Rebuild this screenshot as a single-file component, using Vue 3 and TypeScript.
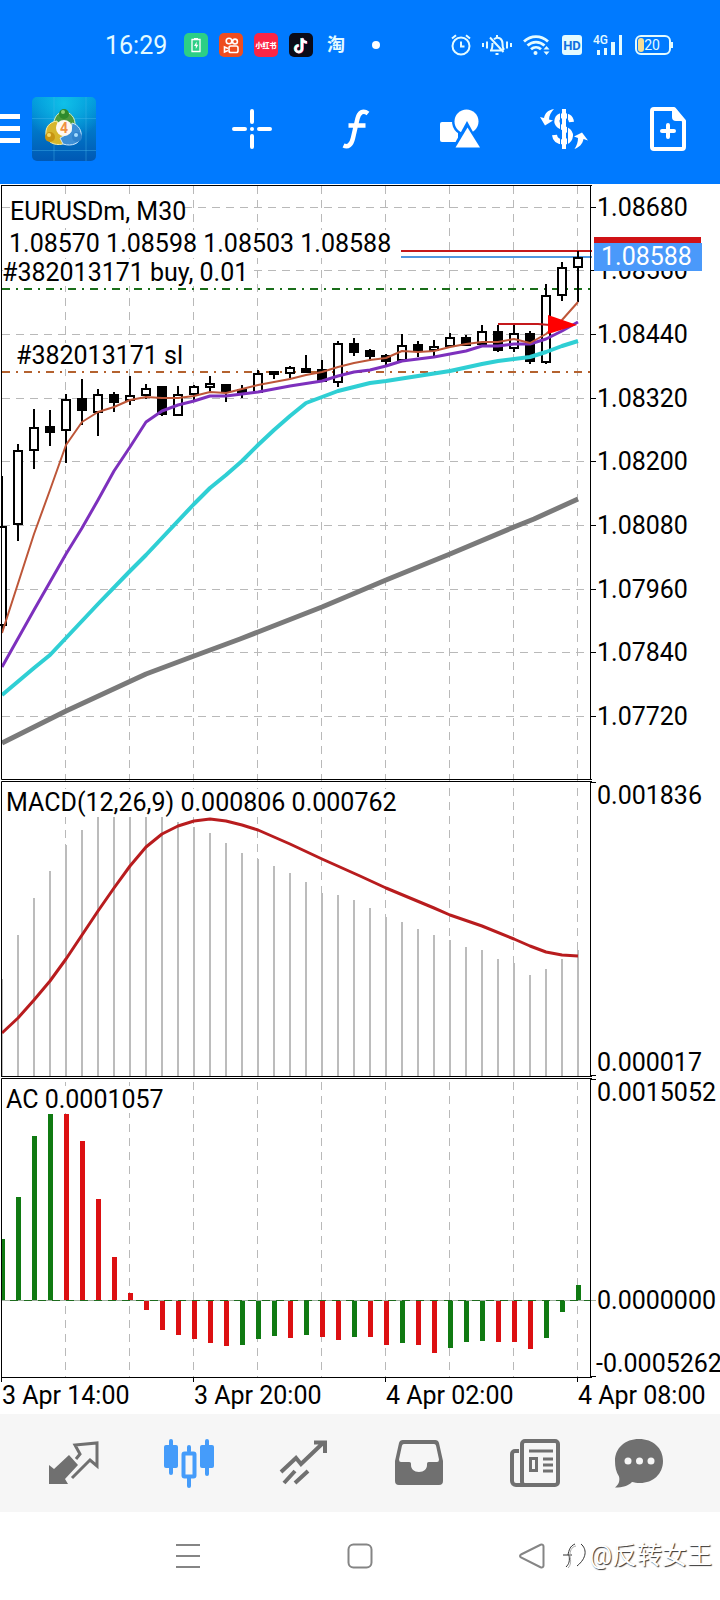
<script setup lang="ts">
interface Candle {
  x: number
  high: number
  top: number
  bottom: number
  low: number
  filled: boolean
}

interface Label {
  text: string
  x: number
  y: number
}

const STEP = 16
const FIRST = 2
const ZERO = 1300

const gridX = Array.from({ length: 9 }, (_, i) => 65.5 + i * 64)

const prices: Label[] = [
  ['1.08680', 207.5],
  ['1.08560', 270.5],
  ['1.08440', 334.5],
  ['1.08320', 398.5],
  ['1.08200', 461.5],
  ['1.08080', 525.5],
  ['1.07960', 589.5],
  ['1.07840', 652.5],
  ['1.07720', 716.5],
].map(([text, y]) => ({ text: String(text), x: 597, y: Number(y) }))

const scaleLabels: Label[] = [
  { text: '0.001836', x: 597, y: 804 },
  { text: '0.000017', x: 597, y: 1071 },
  { text: '0.0015052', x: 597, y: 1101 },
  { text: '0.0000000', x: 597, y: 1309 },
  { text: '-0.0005262', x: 596, y: 1372 },
]

const times: Label[] = [
  { text: '3 Apr 14:00', x: 2, y: 1404 },
  { text: '3 Apr 20:00', x: 194, y: 1404 },
  { text: '4 Apr 02:00', x: 386, y: 1404 },
  { text: '4 Apr 08:00', x: 578, y: 1404 },
]

// high, body top, body bottom, low, bearish
const rawCandles: [number, number, number, number, number][] = [
  [476, 526, 626, 633, 0],
  [444, 450, 525, 541, 0],
  [409, 427, 451, 469, 0],
  [410, 426, 433, 446, 1],
  [394, 399, 431, 463, 0],
  [379, 398, 411, 425, 1],
  [389, 394, 413, 436, 0],
  [392, 394, 403, 412, 1],
  [376, 395, 401, 405, 0],
  [384, 388, 396, 399, 0],
  [386, 386, 415, 416, 1],
  [386, 394, 416, 416, 0],
  [385, 386, 395, 401, 0],
  [376, 383, 388, 392, 0],
  [384, 384, 392, 402, 1],
  [385, 389, 394, 398, 1],
  [370, 373, 393, 393, 0],
  [371, 371, 375, 379, 1],
  [366, 367, 374, 378, 0],
  [355, 368, 373, 373, 1],
  [360, 369, 382, 382, 1],
  [341, 343, 383, 387, 0],
  [338, 343, 353, 356, 1],
  [349, 350, 357, 361, 1],
  [354, 355, 362, 367, 1],
  [334, 345, 361, 361, 0],
  [341, 344, 352, 357, 1],
  [340, 346, 351, 358, 0],
  [333, 337, 347, 347, 0],
  [335, 337, 346, 346, 1],
  [325, 331, 345, 345, 0],
  [325, 331, 351, 352, 1],
  [325, 333, 349, 352, 0],
  [331, 333, 362, 364, 1],
  [284, 295, 363, 364, 0],
  [262, 267, 296, 301, 0],
  [251, 257, 268, 302, 0],
]

const candles: Candle[] = rawCandles.map(([high, top, bottom, low, f], i) => ({
  x: FIRST + i * STEP,
  high,
  top,
  bottom,
  low,
  filled: f === 1,
}))

const fastMa =
  '2,633 34,534 50,490 66,445 82,422 98,412 114,407 130,400 146,397 162,398 178,398 194,396 210,392 226,393 242,389 258,385 274,382 290,379 306,375 322,372 338,367 354,363 370,360 386,358 402,351 418,352 434,351 450,347 466,344 482,342 498,342 514,339 530,343 546,334 562,320 578,302'
const midMa =
  '2,667 34,610 66,554 82,528 98,500 114,471 130,447 146,422 162,411 178,405 194,401 210,396 226,396 242,394 258,392 290,386 322,381 338,376 354,372 370,370 386,366 402,361 434,357 466,351 482,346 498,346 514,344 530,344 546,339 562,331 578,322'
const slowMa =
  '2,695 34,668 50,655 66,638 98,604 130,571 146,555 194,504 210,488 226,475 242,461 258,445 274,430 290,416 306,403 322,397 338,391 370,383 386,381 418,376 450,371 482,364 498,361 530,357 546,352 562,346 578,341'
const longMa =
  '2,743 66,711 146,674 194,656 240,639 258,632 322,607 360,591 386,580 450,554 514,527 534,519 578,499'
const signal =
  '2,1033 18,1018 34,1000 50,981 66,959 82,935 98,911 114,888 130,866 146,847 162,834 178,826 194,821 210,819 226,821 242,825 258,830 290,844 322,859 360,876 386,888 434,908 450,915 482,926 514,939 530,946 546,952 562,955 578,956'

const macd = [
  979, 935, 898, 871, 845, 830, 816, 816, 816, 816, 816, 822, 827, 833, 843, 853, 859, 866, 873,
  882, 893, 895, 900, 908, 917, 922, 929, 935, 940, 947, 950, 959, 963, 975, 969, 959, 950,
]

const acValues = [
  1239, 1197, 1136, 1114, 1114, 1141, 1199, 1257, 1293, 1310, 1330, 1335, 1339, 1343, 1346, 1345,
  1339, 1336, 1338, 1335, 1337, 1340, 1337, 1337, 1345, 1343, 1345, 1353, 1348, 1342, 1341, 1342,
  1342, 1349, 1338, 1312, 1285,
]
const acColors = 'GGGGRRRRRRRRRRRGGGRGRRGRRGRRGGGRRRGGG'
const acBars = acValues.map((v, i) => ({
  x: i * STEP + (i === 0 ? 2 : 0),
  width: i === 0 ? 3 : 5,
  y: v < ZERO ? v : ZERO + 1,
  height: v < ZERO ? ZERO - v : v - ZERO - 1,
  rising: acColors[i] === 'G',
}))
</script>

<template>
  <div class="screen">
    <header class="top">
      <div class="status">
        <span class="clock">16:29</span>
        <div class="apps">
          <svg class="app" viewBox="0 0 24 24" aria-hidden="true">
            <rect width="24" height="24" rx="5" fill="#2ccf86" />
            <path d="M8 6.500h8v12H8z" fill="none" stroke="#fff" stroke-width="1.300" />
            <path d="M10 5h4v1.500h-4zM12.800 8.500 10 13h1.800v3L14.300 11.800h-1.800z" fill="#fff" />
          </svg>
          <svg class="app" viewBox="0 0 24 24" aria-hidden="true">
            <rect width="24" height="24" rx="5" fill="#ee4d1f" />
            <g fill="none" stroke="#fff" stroke-width="1.600">
              <circle cx="10" cy="8" r="2.800" />
              <circle cx="16" cy="8.500" r="2.400" />
              <rect x="10" y="13" width="9" height="6.500" rx="1.800" />
              <path d="M9 15.500 5.500 14v5L9 17.500" />
            </g>
          </svg>
          <svg class="app" viewBox="0 0 24 24" aria-hidden="true">
            <rect width="24" height="24" rx="5" fill="#fb2545" />
            <text x="12" y="15" class="app-word">小红书</text>
          </svg>
          <svg class="app" viewBox="0 0 24 24" aria-hidden="true">
            <rect width="24" height="24" rx="5" fill="#0b0b18" />
            <g fill="none" stroke-width="2.600">
              <path d="M12.500 5v10.500a3.300 3.300 0 1 1-3.300-3.300M12.500 5c.4 2.600 2 4 4.800 4.200" stroke="#27e5e0" />
              <path d="M13.700 5.500V16a3.300 3.300 0 1 1-3.300-3.300M13.700 5.500c.4 2.600 2 4 4.800 4.200" stroke="#fb2a52" />
              <path d="M13.100 5.200v10.600a3.300 3.300 0 1 1-3.300-3.300M13.100 5.200c.4 2.600 2 4 4.800 4.200" stroke="#fff" />
            </g>
          </svg>
        </div>
        <span class="tao">淘</span>
        <span class="dot"></span>
        <div class="signals">
          <svg width="20" height="22" viewBox="0 0 20 22" aria-hidden="true">
            <g fill="none" stroke="#e4fbff" stroke-width="2">
              <circle cx="10" cy="12" r="8.500" />
              <path d="M10 7.500V12.500h3.500M1 4.500 5 1.200M19 4.500 15 1.200" />
            </g>
          </svg>
          <svg width="30" height="22" viewBox="0 0 30 22" aria-hidden="true">
            <g fill="none" stroke="#e4fbff" stroke-width="2">
              <path d="M1 9v4M5 7.500v7M25 7.500v7M29 9v4M8 16.500h12.500M9.500 16c1-2 1-4 1-7M12 5.200c4.500-3.500 8.500 0 8.500 4.300 0 3 .2 5 1.500 6.500M8 3.500 21.500 18" />
              <path d="M13.500 20h3M15 1v2" />
            </g>
          </svg>
          <svg width="28" height="22" viewBox="0 0 28 22" aria-hidden="true">
            <g fill="none" stroke="#e4fbff" stroke-width="2.800">
              <path d="M1 7.500c7-6.500 17-6.500 24 0M4.500 11.500c5-4.600 12-4.600 17 0M8 15.300c3-2.600 7-2.600 10 0" />
            </g>
            <circle cx="12.500" cy="19" r="2" fill="#e4fbff" />
            <path d="M20.500 15.500 23.500 12l3 3.500zM20.500 17.500l3 3.500 3-3.500z" fill="#e4fbff" />
          </svg>
          <svg width="20" height="22" viewBox="0 0 20 22" aria-hidden="true">
            <rect y="1" width="20" height="20" rx="3" fill="#e4fbff" />
            <text x="10" y="16" class="hd">HD</text>
          </svg>
          <svg width="30" height="22" viewBox="0 0 30 22" aria-hidden="true">
            <text x="0" y="10" class="net">4G</text>
            <path d="M4 16h3v5H4zM11 14h3v7h-3zM18 8h4v13h-4zM26 1h3v20h-3z" fill="#e4fbff" />
          </svg>
          <svg width="40" height="22" viewBox="0 0 40 22" aria-hidden="true">
            <rect x="2" y="2" width="34" height="18" rx="5" fill="none" stroke="#e4fbff" stroke-width="2" />
            <rect x="4" y="4" width="6" height="14" rx="3" fill="#f6dd94" />
            <path d="M38 8v6" stroke="#e4fbff" stroke-width="2" />
            <text x="18" y="16" class="level">20</text>
          </svg>
        </div>
      </div>

      <div class="toolbar">
        <button class="menu" type="button" aria-label="Menu"><i></i><i></i><i></i></button>
        <svg class="logo" viewBox="0 0 64 64" aria-hidden="true">
          <defs>
            <linearGradient id="sky" x1="0" y1="0" x2="0" y2="1">
              <stop offset="0" stop-color="#0098dc" />
              <stop offset="1" stop-color="#0058b4" />
            </linearGradient>
            <radialGradient id="glow" cx=".5" cy=".1" r=".6">
              <stop offset="0" stop-color="#10c0e8" />
              <stop offset="1" stop-color="#10c0e8" stop-opacity="0" />
            </radialGradient>
          </defs>
          <rect width="64" height="64" rx="5" fill="url(#sky)" />
          <rect width="64" height="64" rx="5" fill="url(#glow)" />
          <path d="M22 0v64M54 0v64M0 21.500h64M0 53.500h64" stroke="#48b8ee" stroke-opacity=".4" />
          <path d="M22 30c-1-10 4-15 10-15s12 5 11 15l-6 3H27z" fill="#4d9a3c" stroke="#d8ecc0" />
          <path d="M25 24c-8 1-12 7-11 14s8 11 17 9l3-5-7-8z" fill="#d7b62c" stroke="#fbf0a8" />
          <path d="M40 26c7 2 10 8 9 14s-9 10-18 7l-3-6 11-6z" fill="#3d8fd6" stroke="#cfeaff" />
          <circle cx="32" cy="17" r="5" fill="#2e8a2c" />
          <circle cx="31" cy="15" r="2" fill="#8ed070" />
          <circle cx="18" cy="40" r="5" fill="#c79412" />
          <circle cx="17" cy="38" r="2" fill="#f5dc6a" />
          <circle cx="45" cy="40" r="5" fill="#2f82cc" />
          <circle cx="44" cy="38" r="2" fill="#a5dcff" />
          <circle cx="32" cy="31" r="8" fill="#fff8f0" />
          <text x="32" y="36" class="four">4</text>
        </svg>
        <div class="tools">
          <button type="button" aria-label="Crosshair">
            <svg width="40" height="40" viewBox="0 0 40 40">
              <path d="M20 2v11M20 27v11M2 20h11M27 20h11" stroke="#fff" stroke-width="4" stroke-linecap="round" />
              <circle cx="20" cy="20" r="2" fill="#fff" />
            </svg>
          </button>
          <button type="button" aria-label="Indicators">
            <svg width="28" height="40" viewBox="0 0 28 40">
              <path d="M26 4.500c-5-4-9-1-10.500 5L11 29c-1.500 7-5 9.500-9.500 7.500M6.500 16.500h17" fill="none" stroke="#fff" stroke-width="4.500" />
            </svg>
          </button>
          <button type="button" aria-label="Objects">
            <svg width="40" height="40" viewBox="0 0 40 40">
              <rect y="13" width="18" height="20" rx="2" fill="#fff" />
              <circle cx="26.500" cy="12.500" r="14.500" fill="#007aff" />
              <circle cx="26.500" cy="12.500" r="12" fill="#fff" />
              <path d="M27 12 12 39.500h30z" fill="#007aff" />
              <path d="M27.500 18.500 15.500 38.500h24.500z" fill="#fff" />
            </svg>
          </button>
          <button type="button" aria-label="Trade">
            <svg width="48" height="40" viewBox="0 0 48 40">
              <path d="M31.500 13c-.5-5-5-7-9-6.500-6 .5-7.500 7-3 10.500 3 2 6.500 2.500 9 5 4 4 1.500 11-4.500 11-5.500 0-9-2-9.500-7" fill="none" stroke="#fff" stroke-width="5" />
              <path d="M20.500 0v40M27.500 0v40" stroke="#007aff" stroke-width="1" />
              <path d="M24 0v40" stroke="#fff" stroke-width="4" />
              <path d="M14 0C8 1 5 4 4 9L0 8l5 8.500 8-5-4-1c0-4 2-7 5-10.500zM34.500 40c5-2 8-5 9-10l4.500 1.500-6-8-8 4 4 1.500c0 4-1 7-3.500 11z" fill="#fff" />
            </svg>
          </button>
          <button type="button" aria-label="New order">
            <svg width="36" height="44" viewBox="0 0 36 44">
              <path d="M4 2h20l10 12v26a2 2 0 0 1-2 2H4a2 2 0 0 1-2-2V4a2 2 0 0 1 2-2z" fill="none" stroke="#fff" stroke-width="4" stroke-linejoin="round" />
              <path d="M22 2v8a4 4 0 0 0 4 4h9L25 1z" fill="#fff" />
              <path d="M18 18v12M12 24h12" stroke="#fff" stroke-width="4" stroke-linecap="round" />
            </svg>
          </button>
        </div>
      </div>
    </header>

    <main>
      <svg class="chart" viewBox="0 184 720 1230" role="img" aria-label="EURUSDm M30 chart">
        <g class="grid">
          <line v-for="x in gridX" :key="x" :x1="x" :x2="x" y1="186" y2="1377" />
          <line v-for="p in prices" :key="p.text" x1="2" x2="590" :y1="p.y" :y2="p.y" />
        </g>

        <g class="plate">
          <rect x="10" y="200" width="172" height="27" />
          <rect x="8" y="230" width="393" height="28" />
          <rect x="3" y="259" width="251" height="27" />
          <rect x="16" y="343" width="172" height="26" />
        </g>

        <path class="buy" d="M2 289H590" />
        <path class="sl" d="M2 372H590" />
        <path d="M401 251H592" stroke="#c4191c" stroke-width="2" />
        <path d="M401 257H592" stroke="#4f97df" stroke-width="2" />

        <g v-for="c in candles" :key="c.x" class="candle">
          <path :d="`M${c.x} ${c.high}V${c.low}`" />
          <rect
            :x="c.x - 4"
            :y="c.top + 1"
            width="8"
            :height="c.bottom - c.top - 2"
            :class="{ filled: c.filled }"
          />
        </g>

        <g class="line">
          <polyline :points="longMa" stroke="#7a7a7a" stroke-width="5" />
          <polyline :points="slowMa" stroke="#2fcfd4" stroke-width="4" />
          <polyline :points="midMa" stroke="#7d30bd" stroke-width="3" />
          <polyline :points="fastMa" stroke="#bd5638" stroke-width="2" />
          <path d="M498 324H538L550 325" stroke="#c4191c" stroke-width="2" />
        </g>
        <path d="M548 315 577 325 548 334z" fill="#f00" />

        <g class="label">
          <text x="10" y="220">EURUSDm, M30</text>
          <text x="9" y="252">1.08570 1.08598 1.08503 1.08588</text>
          <text x="2" y="281">#382013171 buy, 0.01</text>
          <text x="16" y="364">#382013171 sl</text>
        </g>

        <path
          v-for="(v, i) in macd"
          :key="`m${i}`"
          :d="`M${FIRST + i * STEP} ${v}V1076`"
          stroke="#bcbcbc"
          stroke-width="2"
        />
        <rect class="plate" x="6" y="789" width="399" height="28" />
        <polyline class="line" :points="signal" stroke="#b81c1e" stroke-width="3" />
        <text class="label" x="6" y="811">MACD(12,26,9) 0.000806 0.000762</text>

        <rect class="plate" x="6" y="1086" width="162" height="27" />
        <path d="M2 1300.500H596" stroke="#9fb09f" />
        <path d="M10 1300.500H590" stroke="#1e6b1e" stroke-dasharray="8 6" />
        <rect
          v-for="b in acBars"
          :key="`a${b.x}`"
          :x="b.x"
          :y="b.y"
          :width="b.width"
          :height="b.height"
          :fill="b.rising ? '#107a12' : '#dc1012'"
        />
        <text class="label" x="6" y="1108">AC 0.0001057</text>

        <path
          class="frame"
          d="M1.500 185V779.500H592M1.500 185.500H592M590.500 185V780M1.500 1077V781.500H592M590.500 781V1077M1.500 1076.500H592M1.500 1382V1078.500H592M590.500 1078V1378M1.500 1377.500H592M591 782.500h5M591 1075.500h5M591 1079.500h5M591 1376.500h5M193.500 1378v4M385.500 1378v4M577.500 1378v4"
        />
        <path v-for="p in prices" :key="`t${p.y}`" class="frame" :d="`M591 ${p.y}h5`" />

        <g class="label">
          <text v-for="p in prices" :key="p.text" :x="p.x" :y="p.y + 8">{{ p.text }}</text>
          <text v-for="l in scaleLabels" :key="l.text" :x="l.x" :y="l.y">{{ l.text }}</text>
          <text v-for="t in times" :key="t.text" :x="t.x" :y="t.y">{{ t.text }}</text>
        </g>

        <rect x="594" y="237" width="107" height="8" fill="#d01216" />
        <rect x="594" y="243" width="108" height="28" fill="#4a99fa" />
        <text class="label quote" x="601" y="265">1.08588</text>
      </svg>
    </main>

    <nav class="tabs" aria-label="Sections">
      <button type="button" aria-label="Quotes">
        <svg viewBox="0 0 50 50">
          <path d="M20 17 29 27 16 41 19 46 0 46V27L5 31z" fill="#707070" />
          <path d="M27 21 31 16 26 7 48 5V28L41 22 23 40" fill="none" stroke="#707070" stroke-width="3" />
        </svg>
      </button>
      <button type="button" aria-label="Charts" aria-current="page">
        <svg viewBox="0 0 50 50">
          <g fill="#459cfa">
            <rect y="7" width="14" height="23" rx="2" />
            <rect x="36" y="7" width="14" height="23" rx="2" />
            <rect x="5" y="1" width="4" height="36" rx="2" />
            <rect x="41" y="1" width="4" height="37" rx="2" />
            <rect x="23" y="7" width="4" height="8" rx="2" />
            <rect x="23" y="38" width="4" height="12" rx="2" />
          </g>
          <rect x="19.500" y="15.500" width="11" height="23" rx="1" fill="#f6f6f6" stroke="#459cfa" stroke-width="4" />
        </svg>
      </button>
      <button type="button" aria-label="Trade">
        <svg viewBox="0 0 50 50">
          <path d="M2 34 17 20 22 26 44 5M35 4.500h11V15M5 45 16 33M16 45 29 33" fill="none" stroke="#707070" stroke-width="4" />
        </svg>
      </button>
      <button type="button" aria-label="History">
        <svg viewBox="0 0 50 50">
          <path fill-rule="evenodd" fill="#707070" d="M9 2h32a4 4 0 0 1 4 3l4 18v20a4 4 0 0 1-4 4H5a4 4 0 0 1-4-4V23L5 5a4 4 0 0 1 4-3zm1 4a2 2 0 0 0-2 1.500L5 21.500q0 2.500 2 2.500H15c2 0 2 1 2 3 0 4 3 7 8 7s8-3 8-7c0-2 0-3 2-3h8q2 0 2-2.500L42 7.500A2 2 0 0 0 40 6z" />
        </svg>
      </button>
      <button type="button" aria-label="News">
        <svg viewBox="0 0 50 50">
          <g fill="none" stroke="#707070" stroke-width="4">
            <rect x="12" y="3" width="36" height="44" rx="3" />
            <path d="M9 13H5a3 3 0 0 0-3 3v27a4 4 0 0 0 4 4h9" />
            <path d="M19 13h24M33 21h10M33 27h10M33 33h10" stroke-width="3" />
            <rect x="20.500" y="20.500" width="6" height="12" stroke-width="3" />
          </g>
        </svg>
      </button>
      <button type="button" aria-label="Messages">
        <svg viewBox="0 0 50 50">
          <path d="M25 1c14 0 24 9 24 22S39 45 26 45c-3 0-6-.5-8-1-4 4-9 5.500-17 5.500 4-3 5-7 4-11C2 34 1 29 1 23 1 10 11 1 25 1z" fill="#707070" />
          <g fill="#f6f6f6">
            <circle cx="14" cy="23" r="3.500" />
            <circle cx="25.500" cy="23" r="3.500" />
            <circle cx="37" cy="23" r="3.500" />
          </g>
        </svg>
      </button>
    </nav>

    <footer class="system">
      <button type="button" aria-label="Recent apps">
        <svg viewBox="0 0 26 26"><path d="M1 2h24M1 13h24M1 24h24" /></svg>
      </button>
      <button type="button" aria-label="Home">
        <svg viewBox="0 0 26 26"><rect x="1.500" y="1.500" width="23" height="23" rx="5" /></svg>
      </button>
      <button type="button" aria-label="Back">
        <svg viewBox="0 0 26 26"><path d="M2 11.500 21.500 1.800Q24.500 1 24.500 3.500V22.500Q24.500 25 21.500 24.200L2 14.500Q0 13 2 11.500z" /></svg>
      </button>
      <span class="watermark">
        <svg width="28" height="30" viewBox="0 0 28 30" aria-hidden="true">
          <path d="M13 3C8 5 7 9 6 14M1 14h9M7 14c1 6 0 9-3 12M19 3c6 5 6 14-4 22" stroke="#333" />
          <path d="M14 5C9 6 8 10 8 15c1 5 1 9-2 12" stroke="#aaa" />
        </svg>
        @反转女王
      </span>
    </footer>
  </div>
</template>

<style>
body {
  margin: 0;
  background: #fff;
}
</style>

<style scoped>
.screen {
  display: flex;
  flex-direction: column;
  min-height: 100vh;
  background: #fff;
  font-family: Roboto, 'Noto Sans CJK SC', sans-serif;
}

button {
  display: flex;
  align-items: center;
  justify-content: center;
  margin: 0;
  padding: 0;
  border: 0;
  background: none;
}

svg {
  display: block;
}

.top {
  background: #007aff;
}

.status {
  display: flex;
  align-items: center;
  height: 56px;
  padding: 17px 46px 0 105px;
}

.status .clock {
  width: 79px;
  color: #e4fbff;
  font-size: 25px;
}

.apps {
  display: flex;
  gap: 11px;
}

.app {
  width: 24px;
  height: 24px;
}

.app-word {
  fill: #fff;
  font-size: 7px;
  font-weight: 900;
  text-anchor: middle;
}

.tao {
  margin-left: 14px;
  color: #e4fbff;
  font-size: 18px;
  font-weight: 700;
  line-height: 24px;
}

.dot {
  width: 8px;
  height: 8px;
  margin-left: 27px;
  border-radius: 50%;
  background: #fff;
}

.signals {
  display: flex;
  gap: 11px;
  margin-left: auto;
}

.hd {
  fill: #0f6fe0;
  font-size: 13px;
  font-weight: 700;
  text-anchor: middle;
}

.net {
  fill: #e4fbff;
  font-size: 12px;
  font-weight: 500;
}

.level {
  fill: #e4fbff;
  font-size: 14px;
  text-anchor: middle;
}

.toolbar {
  display: flex;
  align-items: center;
  height: 111px;
}

.menu {
  flex-direction: column;
  align-items: stretch;
  gap: 7px;
  width: 20px;
}

.menu i {
  height: 5px;
  background: #fff;
}

.logo {
  width: 64px;
  height: 64px;
  margin-left: 12px;
}

.four {
  fill: #f09040;
  font-size: 14px;
  font-weight: 700;
  text-anchor: middle;
}

.tools {
  display: grid;
  grid-template-columns: repeat(5, 104px);
  margin-left: auto;
}

.chart {
  width: 100%;
  height: auto;
}

.grid line {
  stroke: #b9b9b9;
  stroke-dasharray: 8 6;
}

.plate,
.plate rect {
  fill: #fff;
}

.buy,
.sl {
  fill: none;
  stroke-width: 2;
  stroke-dasharray: 8 6 2 6;
}

.buy {
  stroke: #1a6e1a;
}

.sl {
  stroke: #b4622f;
}

.candle {
  fill: #fff;
  stroke: #000;
  stroke-width: 2;
}

.candle .filled {
  fill: #000;
}

.line {
  fill: none;
  stroke-linejoin: round;
}

.frame {
  fill: none;
  stroke: #000;
}

.label {
  fill: #000;
  font-size: 25px;
}

.quote {
  fill: #fff;
}

.tabs {
  display: grid;
  grid-template-columns: repeat(5, 16fr) 13fr;
  align-items: center;
  height: 98px;
  padding: 0 34px 0 16px;
  background: #f6f6f6;
}

.tabs svg {
  width: 50px;
  height: 50px;
}

.system {
  position: relative;
  display: grid;
  grid-template-columns: repeat(3, 1fr);
  align-items: center;
  height: 88px;
  padding: 0 102px;
}

.system button svg {
  width: 26px;
  height: 26px;
  fill: none;
  stroke: #858585;
  stroke-width: 2;
}

.watermark {
  position: absolute;
  right: 8px;
  top: 29px;
  display: flex;
  align-items: center;
  color: #fff;
  font-size: 25px;
  line-height: 30px;
  text-shadow: 1px 1px 1px #333;
}

.watermark svg {
  fill: none;
}
</style>
